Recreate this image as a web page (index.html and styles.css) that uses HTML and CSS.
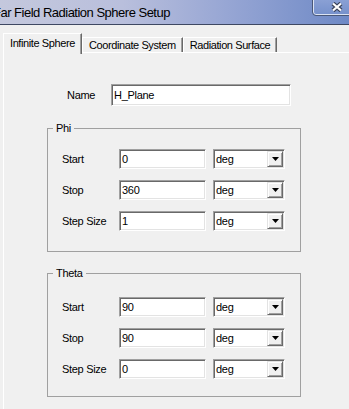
FILE: index.html
```html
<!DOCTYPE html>
<html lang="en">
<head>
  <meta charset="UTF-8" />
  <title>Far Field Radiation Sphere Setup</title>
  <link rel="stylesheet" href="styles.css">
</head>
<body>
  <div class="titlebar">
    <span class="title">Far Field Radiation Sphere Setup</span>
    <div class="close-btn">
      <svg width="14" height="10" viewBox="0 0 14 10">
        <path d="M3 1.5 L11 8.5 M11 1.5 L3 8.5" stroke="#3a4258" stroke-width="4.4" fill="none"/>
        <path d="M3 1.5 L11 8.5 M11 1.5 L3 8.5" stroke="#fff" stroke-width="2.2" fill="none"/>
      </svg>
    </div>
  </div>

  <div class="dialog">
    <div class="tabs">
      <div class="tab active">Infinite Sphere</div>
      <div class="tab">Coordinate System</div>
      <div class="tab">Radiation Surface</div>
    </div>

    <div class="panel">
      <div class="name-row">
        <label>Name</label>
        <input class="field name-field" type="text" value="H_Plane" />
      </div>

      <fieldset class="group">
        <legend>Phi</legend>
        <div class="row">
          <label>Start</label>
          <input class="field" type="text" value="0" />
          <div class="combo"><span>deg</span><span class="combo-btn"><svg width="7" height="4" viewBox="0 0 7 4"><polygon points="0,0 7,0 3.5,4" fill="#000"/></svg></span></div>
        </div>
        <div class="row">
          <label>Stop</label>
          <input class="field" type="text" value="360" />
          <div class="combo"><span>deg</span><span class="combo-btn"><svg width="7" height="4" viewBox="0 0 7 4"><polygon points="0,0 7,0 3.5,4" fill="#000"/></svg></span></div>
        </div>
        <div class="row">
          <label>Step Size</label>
          <input class="field" type="text" value="1" />
          <div class="combo"><span>deg</span><span class="combo-btn"><svg width="7" height="4" viewBox="0 0 7 4"><polygon points="0,0 7,0 3.5,4" fill="#000"/></svg></span></div>
        </div>
      </fieldset>

      <fieldset class="group theta">
        <legend>Theta</legend>
        <div class="row">
          <label>Start</label>
          <input class="field" type="text" value="90" />
          <div class="combo"><span>deg</span><span class="combo-btn"><svg width="7" height="4" viewBox="0 0 7 4"><polygon points="0,0 7,0 3.5,4" fill="#000"/></svg></span></div>
        </div>
        <div class="row">
          <label>Stop</label>
          <input class="field" type="text" value="90" />
          <div class="combo"><span>deg</span><span class="combo-btn"><svg width="7" height="4" viewBox="0 0 7 4"><polygon points="0,0 7,0 3.5,4" fill="#000"/></svg></span></div>
        </div>
        <div class="row">
          <label>Step Size</label>
          <input class="field" type="text" value="0" />
          <div class="combo"><span>deg</span><span class="combo-btn"><svg width="7" height="4" viewBox="0 0 7 4"><polygon points="0,0 7,0 3.5,4" fill="#000"/></svg></span></div>
        </div>
      </fieldset>
    </div>
  </div>
</body>
</html>
```

FILE: styles.css
```css
* {
  box-sizing: border-box;
}
body {
  margin: 0;
  width: 349px;
  height: 409px;
  overflow: hidden;
  background: #f0f0f0;
  font-family: "Liberation Sans", Arial, sans-serif;
  font-size: 11px;
  letter-spacing: -0.3px;
  color: #000;
}

/* window title */
.titlebar {
  height: 25px;
  display: flex;
  align-items: flex-start;
  overflow: hidden;
  background: linear-gradient(to right, #c4c8dd 0%, #b9bfdc 35%, #97a6d4 65%, #6e89c6 100%);
  border-bottom: 1px solid #3e4862;
}
.title {
  margin-left: -7px;
  margin-top: 5px;
  font-size: 13px;
  line-height: 15px;
  letter-spacing: -0.5px;
}
.close-btn {
  margin-left: auto;
  margin-top: -2px;
  margin-right: -4px;
  width: 41px;
  height: 18px;
  flex-shrink: 0;
  display: flex;
  justify-content: center;
  align-items: center;
  padding-left: 8px;
  padding-bottom: 1px;
  border: 1px solid #4a5878;
  border-radius: 0 0 4px 4px;
  box-shadow: inset 0 0 0 1px #dbe3f3;
  background: linear-gradient(#8ba1d5, #7590cb);
}

/* tabs */
.dialog {
  padding: 8px 0 0 3px;
}
.tabs {
  display: flex;
  align-items: flex-end;
  height: 19px;
}
.tab {
  height: 15px;
  padding: 1px 6px 0 6px;
  line-height: 13px;
  letter-spacing: -0.4px;
  border-top: 1px solid #fff;
  border-left: 1px solid #fff;
  border-right: 1px solid #696969;
  box-shadow: inset -1px 0 0 #a0a0a0;
  white-space: nowrap;
}
.tab.active {
  position: relative;
  z-index: 1;
  height: 21px;
  margin-bottom: -2px;
  padding-top: 3px;
  background: #f0f0f0;
}

.panel {
  height: 360px;
  border-top: 1px solid #fff;
  border-left: 1px solid #fff;
}

/* name */
.name-row {
  display: flex;
  align-items: center;
  margin-top: 31px;
  padding-left: 63px;
}
.name-row label {
  width: 44px;
}
.field {
  height: 20px;
  width: 87px;
  padding: 0 2px;
  font: inherit;
  letter-spacing: inherit;
  color: #000;
  background: #fff;
  border: 1px solid;
  border-color: #a0a0a0 #fff #fff #a0a0a0;
  box-shadow: inset 1px 1px 0 #696969, inset -1px -1px 0 #e3e3e3;
  outline: none;
}
.name-field {
  width: 180px;
  height: 22px;
}

/* groups */
.group {
  margin: 16px 0 0 43px;
  width: 254px;
  padding: 14px 14px 20px 14px;
  border: 1px solid #a0a0a0;
  display: flex;
  flex-direction: column;
  gap: 11px;
}
.group + .group {
  margin-top: 15px;
}
.group.theta {
  padding-top: 17px;
  padding-bottom: 17px;
}
.group legend {
  margin-left: -9px;
  padding: 0 3px;
  line-height: 13px;
}
.row {
  display: flex;
  align-items: center;
  height: 20px;
}
.row label {
  width: 57px;
}
.combo {
  margin-left: 7px;
  width: 72px;
  height: 20px;
  display: flex;
  align-items: center;
  padding: 1px 1px 1px 2px;
  background: #fff;
  border: 1px solid;
  border-color: #a0a0a0 #fff #fff #a0a0a0;
  box-shadow: inset 1px 1px 0 #696969, inset -1px -1px 0 #e3e3e3;
}
.combo span:first-child {
  flex: 1;
}
.combo-btn {
  width: 16px;
  height: 16px;
  display: flex;
  justify-content: center;
  align-items: center;
  background: #f0f0f0;
  border: 1px solid;
  border-color: #e3e3e3 #696969 #696969 #e3e3e3;
  box-shadow: inset 1px 1px 0 #fff, inset -1px -1px 0 #a0a0a0;
}
.combo-btn svg {
  display: block;
}
```
